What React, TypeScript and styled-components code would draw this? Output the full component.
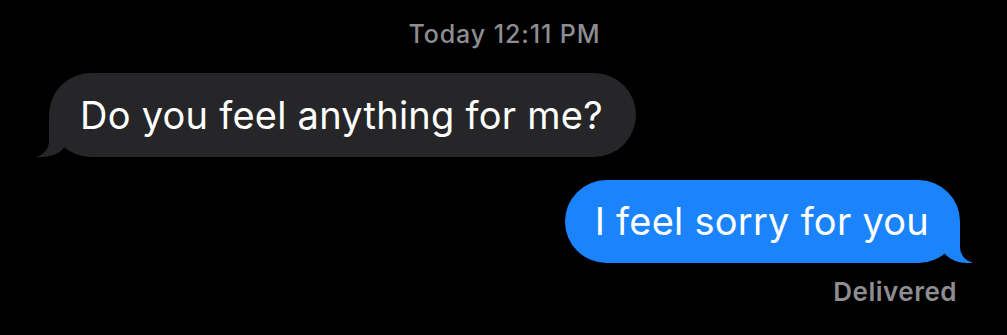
import React from 'react'
import styled, { createGlobalStyle } from 'styled-components'

const GlobalStyle = createGlobalStyle`
    html, body {
        margin: 0;
        padding: 0;
        background: #000000;
    }
    body {
        font-family: Inter, "Liberation Sans", sans-serif;
        -webkit-font-smoothing: antialiased;
    }
`;

const Thread = styled.div`
    width: 1007px;
    height: 335px;
    background: #000000;
    display: flex;
    flex-direction: column;
    padding: 19px 47px 0 49px;
    box-sizing: border-box;
    overflow: hidden;
`;

const Stamp = styled.div`
    align-self: center;
    margin-left: 0;
    color: #8d8d92;
    font-size: 25px;
    line-height: 30px;
    font-weight: 500;
    letter-spacing: 0.9px;
`;

const Row = styled.div<{ $mine?: boolean }>`
    display: flex;
    justify-content: ${props => (props.$mine ? 'flex-end' : 'flex-start')};
    margin-top: ${props => (props.$mine ? '23px' : '24px')};
`;

const Bubble = styled.div<{ $mine?: boolean }>`
    position: relative;
    background: ${props => (props.$mine ? '#1b84fd' : '#262628')};
    color: #ffffff;
    font-size: 38px;
    line-height: 46px;
    padding: ${props => (props.$mine ? '18px 31px 19px 30px' : '19px 33px 19px 31px')};
    border-radius: 42px;
    letter-spacing: 0.25px;

    &::before {
        content: "";
        position: absolute;
        bottom: 0;
        height: 40px;
        width: 32px;
        background: ${props => (props.$mine ? '#1b84fd' : '#262628')};
        ${props => props.$mine
            ? 'right: -12px; border-bottom-left-radius: 26px 22px;'
            : 'left: -12px; border-bottom-right-radius: 26px 22px;'}
    }

    &::after {
        content: "";
        position: absolute;
        bottom: 0;
        height: 40px;
        width: 40px;
        background: #000000;
        ${props => props.$mine
            ? 'right: -40px; border-bottom-left-radius: 16px;'
            : 'left: -40px; border-bottom-right-radius: 16px;'}
    }
`;

const Status = styled.div`
    align-self: flex-end;
    margin-top: 14px;
    margin-right: 3px;
    color: #8d8d92;
    font-size: 26px;
    line-height: 30px;
    font-weight: 600;
    letter-spacing: 0.5px;
`;

export default function App() {
    return (
        <>
            <GlobalStyle />
            <Thread>
                <Stamp>Today 12:11 PM</Stamp>
                <Row>
                    <Bubble>Do you feel anything for me?</Bubble>
                </Row>
                <Row $mine>
                    <Bubble $mine>I feel sorry for you</Bubble>
                </Row>
                <Status>Delivered</Status>
            </Thread>
        </>
    )
}
